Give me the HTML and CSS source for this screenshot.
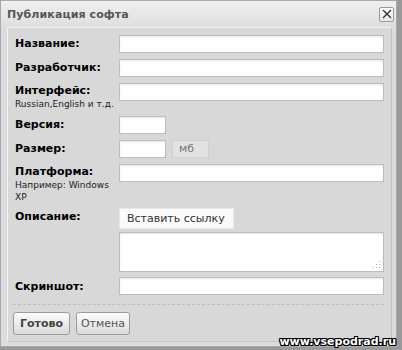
FILE: index.html
```html
<!DOCTYPE html>
<html lang="ru">
<head>
<meta charset="utf-8">
<link rel="stylesheet" href="styles.css">
</head>
<body>
<div class="dialog">
  <div class="titlebar">
    <span class="title">Публикация софта</span>
    <span class="close"><svg width="10" height="10" viewBox="0 0 10 10"><path d="M1 1L9 9M9 1L1 9" stroke="#333" stroke-width="1.4"/></svg></span>
  </div>
  <div class="panel">
    <div class="form">
      <div class="row r1"><div class="label"><div class="main">Название:</div></div><div class="ctl"><div class="input wide"></div></div></div>
      <div class="row"><div class="label"><div class="main">Разработчик:</div></div><div class="ctl"><div class="input wide"></div></div></div>
      <div class="row"><div class="label multi"><div class="main">Интерфейс:</div><div class="sub">Russian,English и т.д.</div></div><div class="ctl"><div class="input wide"></div></div></div>
      <div class="row"><div class="label"><div class="main">Версия:</div></div><div class="ctl"><div class="input short"></div></div></div>
      <div class="row"><div class="label"><div class="main">Размер:</div></div><div class="ctl"><div class="input short"></div><div class="unit">мб</div></div></div>
      <div class="row"><div class="label multi"><div class="main">Платформа:</div><div class="sub">Например: Windows<br>XP</div></div><div class="ctl"><div class="input wide"></div></div></div>
      <div class="row desc"><div class="label"><div class="main">Описание:</div></div>
        <div class="ctl col">
          <div class="insert">Вставить ссылку</div>
          <div class="input area"><span class="grip"></span></div>
        </div>
      </div>
      <div class="row shot"><div class="label"><div class="main">Скриншот:</div></div><div class="ctl"><div class="input wide"></div></div></div>
    </div>
    <div class="footer">
      <div class="btn primary">Готово</div>
      <div class="btn">Отмена</div>
    </div>
  </div>
</div>
<div class="watermark">www.vsepodrad.ru</div>
</body>
</html>
```
FILE: styles.css
```css
* { box-sizing: border-box; }
html, body { margin: 0; padding: 0; }
body {
  width: 402px; height: 350px; overflow: hidden;
  background: #9a9a9a;
  font-family: "DejaVu Sans", Verdana, sans-serif;
  position: relative;
}
.dialog {
  width: 397px; height: 347px;
  background: #dcdcdc;
  border: 1px solid #a8a8a8;
  display: flex; flex-direction: column;
}
.titlebar {
  height: 26px; flex: none;
  display: flex; align-items: center; justify-content: space-between;
  padding: 0 2px 0 6px;
  background: linear-gradient(#f0f0f0, #dedede);
}
.title { font-size: 11px; font-weight: bold; color: #555; letter-spacing: 0.1px; }
.close {
  width: 15px; height: 15px;
  border: 1px solid #999; border-radius: 2px;
  background: linear-gradient(#ffffff, #e8e8e8);
  display: flex; align-items: center; justify-content: center;
}
.panel {
  flex: 1;
  margin: 0 4px 4px 6px;
  border-top: 1px solid #f2f2f2;
  border-left: 1px solid #f2f2f2;
  border-right: 1px solid #c4c4c4;
  border-bottom: 1px solid #c4c4c4;
  background: #d8d8d8;
  padding: 7px 7px 0 7px;
  display: flex; flex-direction: column;
}
.row { display: flex; margin-top: 6px; }
.row.r1 { margin-top: 0; }
.row.desc { margin-top: 5px; }
.label { width: 104px; flex: none; color: #000; }
.main { font-size: 11px; font-weight: bold; line-height: 18px; }
.multi { padding-top: 1px; }
.multi .main { line-height: 14px; }
.sub { font-size: 9px; line-height: 12px; color: #222; }
.ctl { display: flex; gap: 6px; align-items: flex-start; }
.ctl.col { flex-direction: column; gap: 3px; }
.input {
  height: 18px;
  background: #fff;
  border: 1px solid #bdbdbd;
  box-shadow: inset 0 1px 2px #e6e6e6;
}
.wide { width: 265px; }
.short { width: 47px; }
.unit {
  width: 37px; height: 18px;
  border: 1px solid #cfcfcf;
  background: #e2e2e2;
  color: #777; font-size: 11px; line-height: 16px;
  padding-left: 6px;
}
.insert {
  width: 115px; height: 21px;
  background: #fafafa;
  border: 1px solid #e8e8e8;
  font-size: 11px; line-height: 19px; color: #333;
  padding-left: 7px;
}
.area { width: 265px; height: 40px; position: relative; }
.grip {
  position: absolute; right: 3px; bottom: 3px;
  width: 8px; height: 8px;
  background:
    radial-gradient(circle, #aaa 0.8px, transparent 1px) 0 0 / 3px 3px;
  clip-path: polygon(100% 0, 100% 100%, 0 100%);
}
.row.shot { margin-top: 5px; }
.shot .main { line-height: 20px; }
.footer {
  margin-top: 7px;
  border-top: 1px dashed #bdbdbd;
  padding-top: 7px;
  display: flex; gap: 6px;
  margin-left: -2px;
}
.btn {
  height: 23px;
  border: 1px solid #9c9c9c; border-radius: 3px;
  background: linear-gradient(#fdfdfd, #dadada);
  font-size: 11px; line-height: 21px; color: #555;
  text-align: center;
}
.btn.primary { font-weight: bold; color: #444; width: 57px; }
.btn:not(.primary) { width: 54px; }
.watermark {
  position: absolute; right: 6px; bottom: 2px;
  font-family: "DejaVu Sans", Verdana, sans-serif;
  font-size: 11px; font-weight: bold; color: #fff;
  text-shadow: 1px 0 0 #000, -1px 0 0 #000, 0 1px 0 #000, 0 -1px 0 #000, 1px 1px 0 #000, -1px -1px 0 #000, 1px -1px 0 #000, -1px 1px 0 #000;
}
```
